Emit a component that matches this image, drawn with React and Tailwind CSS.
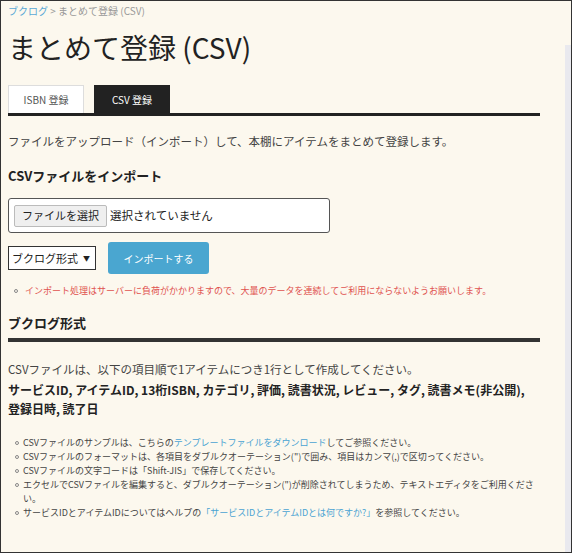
import React from "react";

const notes = [
  <>
    CSVファイルのサンプルは、こちらの
    <span className="text-[#4aa3d2]">テンプレートファイルをダウンロード</span>
    してご参照ください。
  </>,
  <>CSVファイルのフォーマットは、各項目をダブルクオーテーション(")で囲み、項目はカンマ(,)で区切ってください。</>,
  <>CSVファイルの文字コードは「Shift-JIS」で保存してください。</>,
  <>エクセルでCSVファイルを編集すると、ダブルクオーテーション(")が削除されてしまうため、テキストエディタをご利用ください。</>,
  <>
    サービスIDとアイテムIDについてはヘルプの
    <span className="text-[#4aa3d2]">「サービスIDとアイテムIDとは何ですか?」</span>
    を参照してください。
  </>,
];

function Bullet() {
  return <span className="mt-[5px] w-[4px] h-[4px] shrink-0 rounded-full border border-[#888]" />;
}

export default function App() {
  return (
    <div
      className="w-[572px] h-[553px] border border-[#333] bg-[#fcf8ee] flex overflow-hidden text-[#444]"
      style={{ fontFamily: '"Noto Sans CJK JP", "Noto Sans", sans-serif' }}
    >
      <div className="flex-1 pl-[7px]">
        <div className="w-[532px]">
          <div className="h-[20px] leading-[20px] text-[10px] text-[#999]">
            <span className="text-[#5aa9d6]">ブクログ</span> &gt; まとめて登録 (CSV)
          </div>

          <h1 className="mt-[8px] h-[36px] leading-[36px] text-[28px] text-[#222]">まとめて登録 (CSV)</h1>

          <div className="mt-[20px] flex gap-[10px] items-end">
            <div className="w-[76px] h-[28px] bg-white border border-b-0 border-[#ddd] flex items-center justify-center text-[10px] text-[#555]">
              ISBN 登録
            </div>
            <div className="w-[76px] h-[28px] bg-[#222] flex items-center justify-center text-[10px] text-white">
              CSV 登録
            </div>
          </div>
          <div className="h-[3px] bg-[#222]" />

          <p className="mt-[17px] leading-[16px] text-[11.5px]">
            ファイルをアップロード（インポート）して、本棚にアイテムをまとめて登録します。
          </p>

          <h2 className="mt-[17px] leading-[20px] text-[13px] font-bold text-[#222]">CSVファイルをインポート</h2>

          <div className="mt-[12px] w-[322px] h-[35px] bg-white border border-[#555] rounded-[3px] flex items-center px-[5px] gap-[3px]">
            <div className="h-[22px] px-[7px] flex items-center bg-[#efefef] border border-[#bbb] rounded-[2px] text-[11px] text-[#222]">
              ファイルを選択
            </div>
            <span className="text-[11.5px] text-[#222]">選択されていません</span>
          </div>

          <div className="mt-[9px] flex items-center gap-[12px]">
            <div className="w-[88px] h-[24px] bg-white border border-[#333] flex items-center justify-between pl-[3px] pr-[5px] text-[11px] text-[#222]">
              <span>ブクログ形式</span>
              <span className="text-[7px]">▼</span>
            </div>
            <button className="w-[101px] h-[32px] bg-[#4aa6d0] rounded-[3px] text-white text-[10px]">インポートする</button>
          </div>

          <div className="mt-[10px] flex gap-[7px] pl-[6px] text-[9px] leading-[14px] text-[#e0524e]">
            <Bullet />
            <span>インポート処理はサーバーに負荷がかかりますので、大量のデータを連続してご利用にならないようお願いします。</span>
          </div>

          <h2 className="mt-[15px] leading-[20px] text-[13px] font-bold text-[#222]">ブクログ形式</h2>
          <div className="mt-[5px] h-[4px] bg-[#333]" />

          <p className="mt-[18px] leading-[19px] text-[11.5px]">
            CSVファイルは、以下の項目順で1アイテムにつき1行として作成してください。
          </p>
          <p className="mt-[1px] leading-[19px] text-[12px] font-bold text-[#222]">
            サービスID, アイテムID, 13桁ISBN, カテゴリ, 評価, 読書状況, レビュー, タグ, 読書メモ(非公開),
            <br />
            登録日時, 読了日
          </p>

          <ul className="mt-[18px] text-[9px] leading-[14px]">
            {notes.map((n, i) => (
              <li key={i} className="flex gap-[4px] pl-[7px]">
                <Bullet />
                <span>{n}</span>
              </li>
            ))}
          </ul>
        </div>
      </div>
      <div className="w-[6px] mt-[44px] bg-[#e9e9ee]" />
    </div>
  );
}
